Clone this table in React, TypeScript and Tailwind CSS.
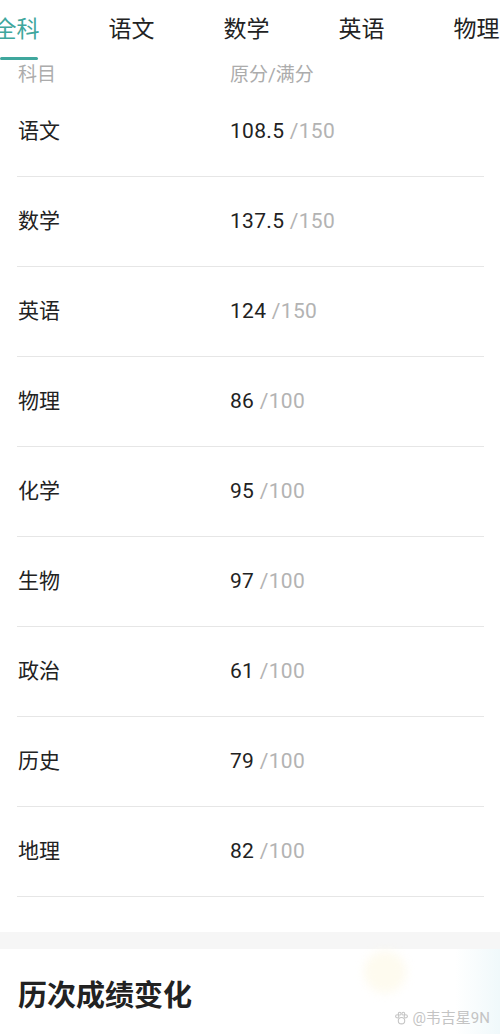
import React from 'react';

const tabs = ['全科', '语文', '数学', '英语', '物理'];

const scores = [
  { subject: '语文', score: '108.5', full: 150 },
  { subject: '数学', score: '137.5', full: 150 },
  { subject: '英语', score: '124', full: 150 },
  { subject: '物理', score: '86', full: 100 },
  { subject: '化学', score: '95', full: 100 },
  { subject: '生物', score: '97', full: 100 },
  { subject: '政治', score: '61', full: 100 },
  { subject: '历史', score: '79', full: 100 },
  { subject: '地理', score: '82', full: 100 },
];

const App: React.FC = () => {
  return (
    <div
      className="w-[500px] h-[1034px] overflow-hidden bg-white"
      style={{ fontFamily: 'Roboto, "Noto Sans CJK SC", sans-serif' }}
    >
      {/* Tabs */}
      <div className="flex h-[60px] ml-[-41px]">
        {tabs.map((t, i) => (
          <div key={t} className="relative w-[115px] shrink-0 flex justify-center">
            <span
              className={`mt-[16px] text-[23px] leading-[28px] ${
                i === 0 ? 'text-[#3fa79d]' : 'text-[#222]'
              }`}
            >
              {t}
            </span>
            {i === 0 && (
              <div className="absolute bottom-0 left-[41px] w-[38px] h-[3px] rounded-full bg-[#3fa79d]" />
            )}
          </div>
        ))}
      </div>

      {/* Score table */}
      <div className="px-[17px] pr-[16px]">
        <div className="flex h-[27px] items-end text-[19px] leading-[24px] text-[#acacac]">
          <span className="w-[213px] pl-px">科目</span>
          <span>原分/满分</span>
        </div>
        {scores.map((s) => (
          <div key={s.subject} className="flex items-center h-[90px] border-b border-[#e6e6e6]">
            <span className="w-[213px] pl-px text-[21px] text-[#222]">{s.subject}</span>
            <span className="text-[21px] tracking-[0.3px] text-[#222]">
              {s.score}
              <span className="text-[#b3b3b3]"> /{s.full}</span>
            </span>
          </div>
        ))}
      </div>

      <div className="h-[35px]" />
      <div className="h-[17px] bg-[#f6f6f6]" />

      {/* History section */}
      <div className="relative h-[100px]">
        <div className="absolute left-[364px] top-[2px] w-[42px] h-[42px] rounded-full bg-[#fefbef] blur-[5px]" />
        <div className="absolute right-0 top-0 w-[45px] h-[100px] bg-gradient-to-l from-[#f0f9fb] to-transparent" />
        <h2 className="relative pt-[28px] pl-[18px] text-[29px] leading-[38px] font-bold text-[#222]">
          历次成绩变化
        </h2>
        <div className="absolute right-[10px] top-[58px] flex items-center gap-[3px] text-[15px] text-[#c4c4c4]">
          <svg width="15" height="15" viewBox="0 0 14 14" fill="none" stroke="#c4c4c4" strokeWidth="1">
            <circle cx="7" cy="9" r="3" />
            <circle cx="3" cy="5" r="1.5" />
            <circle cx="11" cy="5" r="1.5" />
            <circle cx="5.3" cy="2.5" r="1.3" />
            <circle cx="8.7" cy="2.5" r="1.3" />
          </svg>
          <span>@韦吉星9N</span>
        </div>
      </div>
    </div>
  );
};

export default App;
